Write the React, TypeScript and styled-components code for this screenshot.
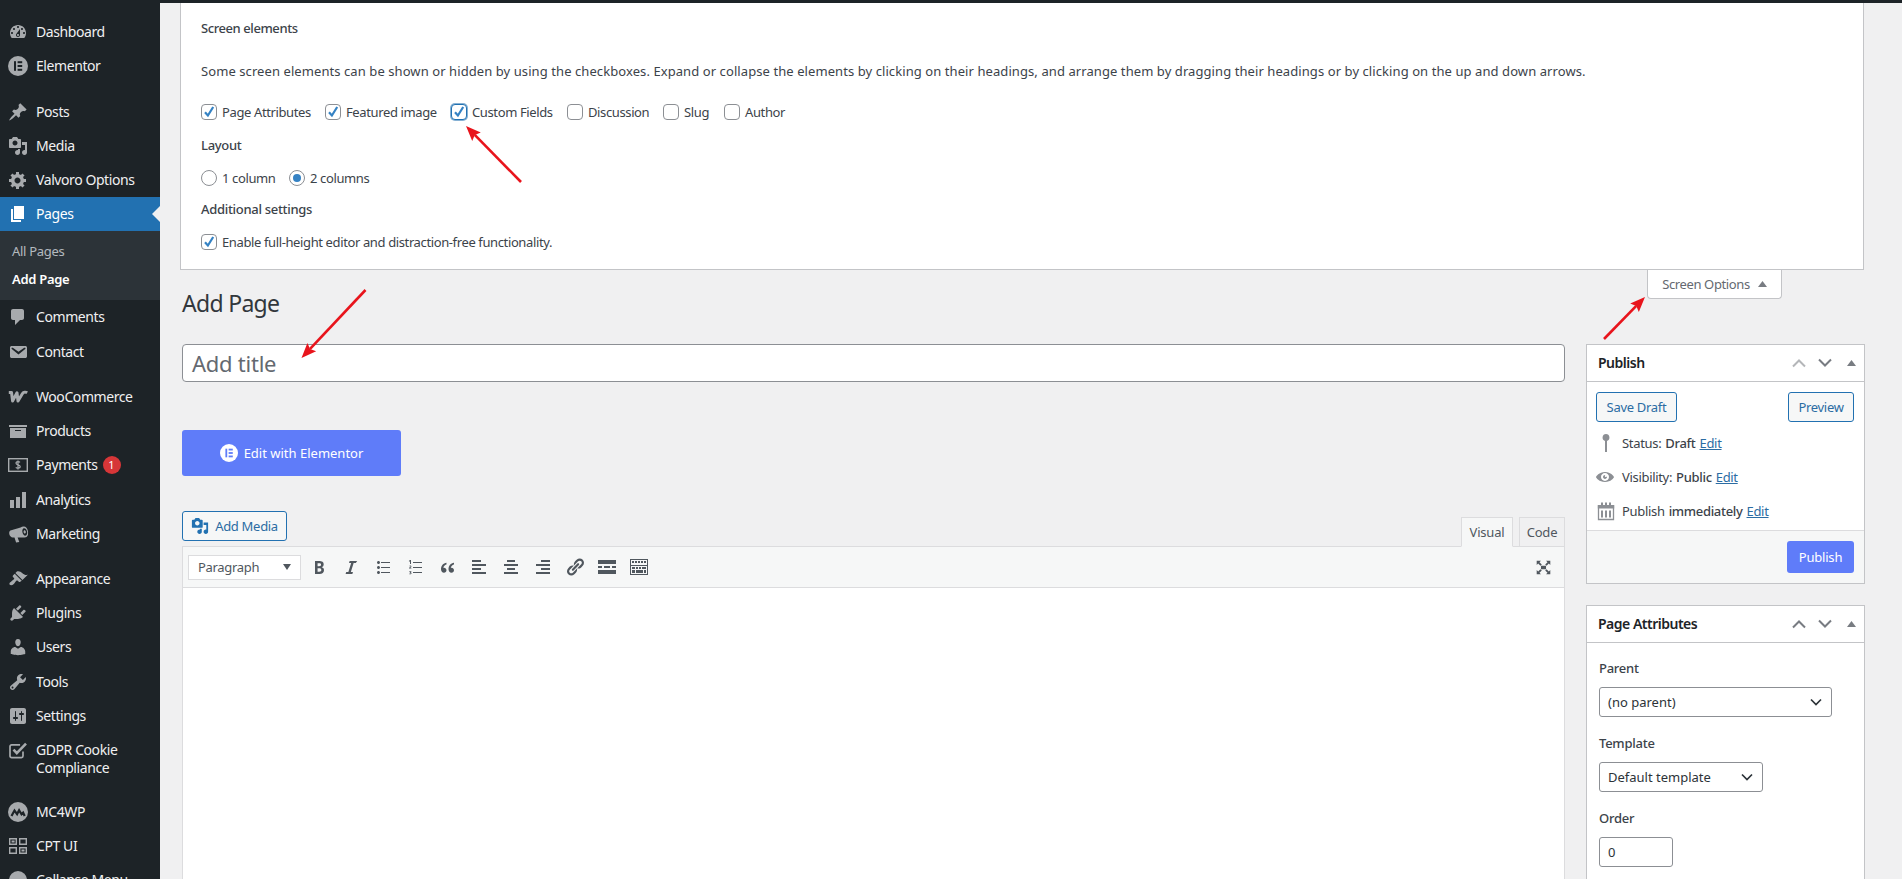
import React from "react";
import styled, { createGlobalStyle } from "styled-components";

const FONT = `"Noto Sans", "Open Sans", "Liberation Sans", sans-serif`;

const Global = createGlobalStyle`
  html, body { margin: 0; padding: 0; height: 879px; overflow: hidden; background: #f0f0f1; }
  body { font-family: ${FONT}; font-size: 13px; color: #3c434a; line-height: 1.4; }
  * { box-sizing: border-box; }
`;

const Page = styled.div`
  width: 1902px;
  height: 879px;
  position: relative;
  overflow: hidden;
  background: #f0f0f1;
  border-top: 3px solid #1d2327;
  display: flex;
`;

/* ---------- sidebar ---------- */
const Sidebar = styled.nav`
  width: 160px;
  flex: none;
  height: 876px;
  background: #1d2327;
  padding-top: 12px;
  overflow: hidden;
`;
const MenuItem = styled.div<{ $active?: boolean; $gap?: boolean; $tall?: boolean }>`
  position: relative;
  display: flex;
  align-items: ${(p) => (p.$tall ? "flex-start" : "center")};
  min-height: 34.22px;
  padding: ${(p) => (p.$tall ? "8px 0 7px" : "0")};
  margin-top: ${(p) => (p.$gap ? "11px" : "0")};
  background: ${(p) => (p.$active ? "#2271b1" : "transparent")};
  color: ${(p) => (p.$active ? "#fff" : "#f0f0f1")};
  font-size: 14px;
  line-height: 18px;
  letter-spacing: -0.42px;
  svg { color: ${(p) => (p.$active ? "#fff" : "#a7aaad")}; }
  ${(p) =>
    p.$active
      ? `&::after {
          content: "";
          position: absolute;
          right: 0;
          top: 50%;
          margin-top: -8px;
          border: 8px solid transparent;
          border-right-color: #f0f0f1;
          border-left-width: 0;
        }`
      : ""}
`;
const MenuIcon = styled.span`
  width: 36px;
  flex: none;
  display: flex;
  justify-content: center;
  svg { display: block; }
`;
const Badge = styled.span`
  display: inline-block;
  width: 18px;
  height: 18px;
  border-radius: 50%;
  background: #d63638;
  color: #fff;
  font-size: 11px;
  line-height: 18px;
  text-align: center;
  margin-left: 5px;
  letter-spacing: 0;
`;
const Submenu = styled.div`
  background: #2c3338;
  padding: 7px 0 6px;
  height: 69px;
`;
const SubItem = styled.div<{ $current?: boolean }>`
  padding-left: 12px;
  height: 28px;
  line-height: 26px;
  font-size: 13px;
  letter-spacing: -0.3px;
  color: ${(p) => (p.$current ? "#fff" : "rgba(240,246,252,.7)")};
  font-weight: ${(p) => (p.$current ? 600 : 400)};
`;

/* ---------- main ---------- */
const Main = styled.main`
  flex: 1;
  min-width: 0;
  padding: 0 38px 0 20px;
  display: flex;
  flex-direction: column;
`;
const OptionsPanel = styled.section`
  height: 267px;
  flex: none;
  background: #fff;
  border: 1px solid #c3c4c7;
  border-top: none;
  padding: 16px 20px 0;
`;
const PanelHeading = styled.div`
  font-weight: 500;
  line-height: 18px;
  letter-spacing: -0.42px;
`;
const PanelText = styled.p`
  margin: 25px 0 0;
  line-height: 18px;
  letter-spacing: 0.08px;
`;
const CheckRow = styled.div<{ $top: number }>`
  display: flex;
  align-items: center;
  margin-top: ${(p) => p.$top}px;
  height: 18px;
  letter-spacing: -0.38px;
`;
const PanelSub = styled(PanelHeading)<{ $top: number }>`
  margin-top: ${(p) => p.$top}px;
  letter-spacing: -0.3px;
`;
const OptLabel = styled.label<{ $w?: number }>`
  display: flex;
  align-items: center;
  gap: 5px;
  width: ${(p) => (p.$w ? `${p.$w}px` : "auto")};
  line-height: 18px;
`;
const Check = styled.span<{ $focus?: boolean }>`
  width: 16px;
  height: 16px;
  flex: none;
  border: 1px solid ${(p) => (p.$focus ? "#2271b1" : "#8c8f94")};
  border-radius: 4px;
  background: #fff;
  box-shadow: ${(p) => (p.$focus ? "0 0 0 1px rgba(34,113,177,.55)" : "none")};
  display: flex;
  align-items: center;
  justify-content: center;
`;
const Radio = styled.span<{ $on?: boolean }>`
  width: 16px;
  height: 16px;
  flex: none;
  border: 1px solid #8c8f94;
  border-radius: 50%;
  background: #fff;
  display: flex;
  align-items: center;
  justify-content: center;
  &::before {
    content: "";
    width: 8px;
    height: 8px;
    border-radius: 50%;
    background: ${(p) => (p.$on ? "#3582c4" : "transparent")};
  }
`;

const HeadRow = styled.div`
  display: flex;
  justify-content: space-between;
  align-items: flex-start;
  height: 74px;
  flex: none;
`;
const Title = styled.h1`
  margin: 17px 0 0 2px;
  font-size: 23px;
  font-weight: 400;
  line-height: 32px;
  color: #32373c;
  letter-spacing: -0.7px;
`;
const ScreenTab = styled.div`
  width: 135px;
  height: 29px;
  margin-right: 82px;
  background: #fff;
  border: 1px solid #c3c4c7;
  border-top: none;
  border-radius: 0 0 4px 4px;
  display: flex;
  align-items: center;
  justify-content: center;
  gap: 8px;
  font-size: 13px;
  letter-spacing: -0.38px;
  color: #646970;
`;
const Columns = styled.div`
  display: flex;
  gap: 21px;
  padding-left: 2px;
`;
const LeftCol = styled.div`
  width: 1383px;
  flex: none;
`;
const RightCol = styled.aside`
  width: 279px;
  flex: none;
  display: flex;
  flex-direction: column;
  gap: 21px;
`;
const TitleInput = styled.div`
  height: 38px;
  border: 1px solid #8c8f94;
  border-radius: 4px;
  background: #fff;
  font-size: 22px;
  line-height: 36px;
  padding-left: 9px;
  color: #646970;
  letter-spacing: -0.25px;
`;
const ElementorButton = styled.div`
  margin-top: 48px;
  width: 219px;
  height: 46px;
  background: #5f7cf9;
  border-radius: 3px;
  color: #fff;
  font-size: 13px;
  letter-spacing: 0;
  display: flex;
  align-items: center;
  justify-content: center;
  gap: 6px;
`;
const AddMediaRow = styled.div`
  display: flex;
  justify-content: space-between;
  align-items: flex-end;
  margin-top: 35px;
  height: 35px;
`;
const OutlineButton = styled.div`
  height: 30px;
  border: 1px solid #2271b1;
  border-radius: 3px;
  background: #f6f7f7;
  color: #2b6ca3;
  display: inline-flex;
  align-items: center;
  justify-content: center;
  font-size: 13px;
  letter-spacing: -0.3px;
`;
const AddMedia = styled(OutlineButton)`
  width: 105px;
  margin-bottom: 5px;
  gap: 6px;
  svg { color: #2271b1; }
`;
const Tabs = styled.div`
  display: flex;
  gap: 6px;
  margin-bottom: -1px;
  position: relative;
`;
const Tab = styled.div<{ $active?: boolean }>`
  height: 30px;
  width: ${(p) => (p.$active ? 52 : 46)}px;
  display: flex;
  align-items: center;
  justify-content: center;
  border: 1px solid #dcdcde;
  border-bottom-color: ${(p) => (p.$active ? "#f6f7f7" : "#dcdcde")};
  background: ${(p) => (p.$active ? "#f6f7f7" : "#f0f0f1")};
  font-size: 13px;
  letter-spacing: -0.2px;
  color: #50575e;
`;
const Editor = styled.div`
  border: 1px solid #dcdcde;
  background: #fff;
  height: 400px;
`;
const Toolbar = styled.div`
  height: 41px;
  background: #f6f7f7;
  border-bottom: 1px solid #dcdcde;
  display: flex;
  align-items: center;
  padding-left: 5px;
  color: #50575e;
`;
const FormatSelect = styled.div`
  width: 113px;
  height: 25px;
  background: #fff;
  border: 1px solid #dcdcde;
  display: flex;
  align-items: center;
  justify-content: space-between;
  padding: 0 9px;
  margin-right: 2px;
  font-size: 13px;
  letter-spacing: -0.3px;
  color: #50575e;
`;
const SmallCaret = styled.span`
  width: 0;
  height: 0;
  border-left: 4px solid transparent;
  border-right: 4px solid transparent;
  border-top: 6px solid #50575e;
`;
const ToolBtn = styled.span`
  width: 32px;
  flex: none;
  display: flex;
  justify-content: center;
  svg { display: block; }
`;
const Spacer = styled.div`
  flex: 1;
`;
const FullBtn = styled(ToolBtn)`
  margin-right: 5px;
`;

const MetaBox = styled.section<{ $h: number }>`
  border: 1px solid #c3c4c7;
  background: #fff;
  height: ${(p) => p.$h}px;
  flex: none;
`;
const MetaHead = styled.header`
  height: 37px;
  border-bottom: 1px solid #c3c4c7;
  display: flex;
  align-items: center;
  padding: 0 0 0 11px;
`;
const MetaTitle = styled.h2`
  margin: 0;
  flex: 1;
  font-size: 14px;
  font-weight: 600;
  letter-spacing: -0.5px;
  color: #1d2327;
`;
const MetaCtl = styled.span`
  width: 26px;
  flex: none;
  display: flex;
  justify-content: center;
  svg { display: block; }
`;
const MetaActions = styled.div`
  display: flex;
  justify-content: space-between;
  padding: 10px 10px 0 9px;
`;
const SaveDraft = styled(OutlineButton)`
  width: 81px;
`;
const Preview = styled(OutlineButton)`
  width: 66px;
`;
const MiscRow = styled.div<{ $first?: boolean }>`
  display: flex;
  align-items: center;
  height: 34px;
  padding-left: 9px;
  margin-top: ${(p) => (p.$first ? "4px" : "0")};
  letter-spacing: -0.32px;
  color: #3c434a;
  svg { color: #8c8f94; flex: none; }
  b { font-weight: 500; margin: 0 4px; }
`;
const MiscIcon = styled.span`
  width: 26px;
  flex: none;
  display: flex;
  justify-content: flex-start;
`;
const EditLink = styled.a`
  color: #2b6ca3;
  text-decoration: underline;
`;
const MetaFooter = styled.div`
  margin-top: 2px;
  height: 53px;
  background: #f6f7f7;
  border-top: 1px solid #dcdcde;
  display: flex;
  align-items: center;
  justify-content: flex-end;
  padding-right: 10px;
`;
const PublishBtn = styled.div`
  width: 67px;
  height: 32px;
  border-radius: 3px;
  background: #5f7cf9;
  color: #fff;
  display: flex;
  align-items: center;
  justify-content: center;
  letter-spacing: -0.2px;
`;
const AttrBody = styled.div`
  padding: 0 12px;
`;
const AttrLabel = styled.div<{ $top: number }>`
  margin-top: ${(p) => p.$top}px;
  font-weight: 500;
  line-height: 18px;
  letter-spacing: -0.25px;
`;
const SelectBox = styled.div<{ $w: number }>`
  margin-top: 10px;
  width: ${(p) => p.$w}px;
  height: 30px;
  border: 1px solid #8c8f94;
  border-radius: 3px;
  background: #fff;
  display: flex;
  align-items: center;
  justify-content: space-between;
  padding: 0 9px 0 8px;
  color: #2c3338;
  svg { display: block; }
`;
const Annotations = styled.svg`
  position: absolute;
  left: 0;
  top: -3px;
  width: 1902px;
  height: 879px;
  pointer-events: none;
`;

/* ---------- icons ---------- */
const I = ({ d, size = 20 }: { d: string; size?: number }) => (
  <svg width={size} height={size} viewBox="0 0 20 20" fill="currentColor">
    <path d={d} />
  </svg>
);
const P = {
  dashboard:
    "M3.76 16h12.48c1.1-1.37 1.76-3.11 1.76-5 0-4.42-3.58-8-8-8s-8 3.58-8 8c0 1.89.66 3.63 1.76 5zM10 4c.55 0 1 .45 1 1s-.45 1-1 1-1-.45-1-1 .45-1 1-1zM6 6c.55 0 1 .45 1 1s-.45 1-1 1-1-.45-1-1 .45-1 1-1zm8 0c.55 0 1 .45 1 1s-.45 1-1 1-1-.45-1-1 .45-1 1-1zm-5.37 5.55L12 7v6c0 1.1-.9 2-2 2s-2-.9-2-2c0-.57.24-1.08.63-1.45zM4 10c.55 0 1 .45 1 1s-.45 1-1 1-1-.45-1-1 .45-1 1-1zm12 0c.55 0 1 .45 1 1s-.45 1-1 1-1-.45-1-1 .45-1 1-1zm-5 3c0-.55-.45-1-1-1s-1 .45-1 1 .45 1 1 1 1-.45 1-1z",
  post:
    "M10.44 3.02l1.82-1.82 6.36 6.35-1.83 1.82c-1.05-.68-2.48-.57-3.41.36l-.75.75c-.92.93-1.04 2.35-.35 3.41l-1.83 1.82-2.41-2.41-2.8 2.79c-.42.42-3.38 2.71-3.8 2.29s1.86-3.39 2.28-3.81l2.79-2.79L4.1 9.36l1.83-1.82c1.05.69 2.48.57 3.4-.36l.75-.75c.93-.92 1.05-2.35.36-3.41z",
  media:
    "M13 11V4c0-.55-.45-1-1-1h-1.67L9 1H5L3.67 3H2c-.55 0-1 .45-1 1v7c0 .55.45 1 1 1h10c.55 0 1-.45 1-1zM7 4.5c1.38 0 2.5 1.12 2.5 2.5S8.38 9.5 7 9.5 4.5 8.38 4.5 7 5.62 4.5 7 4.5zM14 6h5v10.5c0 1.38-1.12 2.5-2.5 2.5S14 17.88 14 16.5s1.12-2.5 2.5-2.5c.17 0 .34.02.5.05V9h-3V6zm-4 8.05V13h2v3.5c0 1.38-1.12 2.5-2.5 2.5S7 17.88 7 16.5 8.12 14 9.5 14c.17 0 .34.02.5.05z",
  gear:
    "M18 12h-2.18c-.17.7-.44 1.35-.81 1.93l1.54 1.54-2.1 2.1-1.54-1.54c-.58.36-1.23.63-1.91.79V19H8v-2.18c-.68-.16-1.33-.43-1.91-.79l-1.54 1.54-2.12-2.12 1.54-1.54c-.36-.58-.63-1.23-.79-1.91H1V9.03h2.17c.16-.7.44-1.35.8-1.94L2.43 5.55l2.1-2.1 1.54 1.54c.58-.37 1.24-.64 1.93-.81V2h3v2.18c.68.16 1.33.43 1.91.79l1.54-1.54 2.12 2.12-1.54 1.54c.36.59.64 1.24.8 1.94H18V12zm-8.5 1.5c1.66 0 3-1.34 3-3s-1.34-3-3-3-3 1.34-3 3 1.34 3 3 3z",
  page: "M6 15V2h10v13H6zm-1 1h8v2H3V5h2v11z",
  comment: "M5 2h9c1.1 0 2 .9 2 2v7c0 1.1-.9 2-2 2h-2l-5 5v-5H5c-1.1 0-2-.9-2-2V4c0-1.1.9-2 2-2z",
  email:
    "M3.87 4h13.25C18.37 4 19 4.59 19 5.79v8.42c0 1.19-.63 1.79-1.88 1.79H3.87c-1.25 0-1.88-.6-1.88-1.79V5.79c0-1.2.63-1.79 1.88-1.79zm6.62 8.6l6.74-5.53c.24-.2.43-.66.13-1.07-.29-.41-.82-.42-1.17-.17l-5.7 3.86L4.8 5.83c-.35-.25-.88-.24-1.17.17-.3.41-.11.87.13 1.07z",
  archive: "M19 4v2H1V4h18zM2 7h16v10H2V7zm11 3V9H7v1h6z",
  bars: "M18 18V2h-4v16h4zm-6 0V7H8v11h4zm-6 0v-8H2v8h4z",
  megaphone:
    "M15.4 2.6c1.9-.5 4 1.5 4.6 4.6.5 3-.3 5.5-2.2 6l-1.2.2H9.6l1.7 4.6-3.2.5-1.6-5.1H4.6c-1.4 0-2.6-1.2-3.2-2.9-.5-1.8-.1-3.4 1-4L12.6 3.4c.9-.5 1.9-.7 2.8-.8zm.5 1.7c-1.3.3-1.9 2.2-1.4 4.2.5 2.1 1.9 3.4 3.2 3.1 1.2-.4 1.8-2.3 1.3-4.3-.5-2-1.9-3.3-3.1-3zm.4 2c.7-.2 1.3.5 1.5 1.4.2.9-.1 1.7-.7 1.9-.7.1-1.3-.5-1.5-1.4-.2-.9.1-1.7.7-1.9z",
  appearance:
    "M14.48 11.06L7.41 3.99l1.5-1.5c.5-.56 2.3-.47 3.51.32 1.21.8 1.43 1.28 2.91 2.1 1.18.64 2.45 1.26 4.45.85zm-.71.71L6.7 4.7 4.93 6.47c-.39.39-.39 1.02 0 1.41l1.06 1.06c.39.39.39 1.03 0 1.42-.6.6-1.43 1.11-2.21 1.69-.35.26-.7.53-1.01.84C1.43 13.23.99 14.95 1.87 15.82c.87.87 2.59.44 3.93-.9.31-.31.58-.66.84-1.01.58-.78 1.09-1.61 1.69-2.21.39-.39 1.02-.39 1.41 0l1.06 1.06c.39.39 1.02.39 1.41 0z",
  plugins:
    "M13.11 4.36L9.87 7.6 8 5.73l3.24-3.24c.35-.34 1.05-.2 1.56.32.52.51.66 1.21.31 1.55zm-8 1.77l.91-1.12 9.01 9.01-1.19.84c-.71.71-2.63 1.16-3.82 1.16H6.14L4.9 17.26c-.59.59-1.54.59-2.12 0-.59-.58-.59-1.53 0-2.12l1.24-1.24v-3.88c0-1.13.4-3.19 1.09-3.89zm7.26 3.97l3.24-3.24c.34-.35 1.04-.21 1.55.31.52.51.66 1.21.31 1.55l-3.24 3.25z",
  users:
    "M10 9.25c-2.27 0-2.73-3.44-2.73-3.44C7 4.02 7.82 2 9.97 2c2.16 0 2.98 2.02 2.71 3.81 0 0-.41 3.44-2.68 3.44zm0 2.57L12.72 10c2.39 0 4.52 2.33 4.52 4.53v2.49s-3.65 1.13-7.24 1.13c-3.65 0-7.24-1.13-7.24-1.13v-2.49c0-2.25 1.94-4.48 4.47-4.48z",
  tools:
    "M16.68 9.77c-1.34 1.34-3.3 1.67-4.95.99l-5.41 6.52c-.99.99-2.59.99-3.58 0s-.99-2.59 0-3.57l6.52-5.42c-.68-1.65-.35-3.61.99-4.95 1.28-1.28 3.12-1.62 4.72-1.06l-2.89 2.89 2.82 2.82 2.86-2.87c.53 1.58.18 3.39-1.08 4.65zM3.81 16.21c.4.39 1.04.39 1.43 0 .4-.4.4-1.04 0-1.43-.39-.4-1.03-.4-1.43 0-.39.39-.39 1.03 0 1.43z",
  settings:
    "M18 16V4c0-1.1-.9-2-2-2H4c-1.1 0-2 .9-2 2v12c0 1.1.9 2 2 2h12c1.1 0 2-.9 2-2zM8 11h1c.55 0 1 .45 1 1s-.45 1-1 1H8v1.5c0 .28-.22.5-.5.5s-.5-.22-.5-.5V13H6c-.55 0-1-.45-1-1s.45-1 1-1h1V5.5c0-.28.22-.5.5-.5s.5.22.5.5V11zm5-2h-1c-.55 0-1-.45-1-1s.45-1 1-1h1V5.5c0-.28.22-.5.5-.5s.5.22.5.5V7h1c.55 0 1 .45 1 1s-.45 1-1 1h-1v5.5c0 .28-.22.5-.5.5s-.5-.22-.5-.5V9z",
  eye:
    "M10 4.4C3.439 4.4 0 9.232 0 10c0 .766 3.439 5.6 10 5.6 6.56 0 10-4.834 10-5.6 0-.768-3.44-5.6-10-5.6zm0 9.907c-2.455 0-4.445-1.928-4.445-4.307S7.545 5.691 10 5.691s4.444 1.93 4.444 4.309-1.989 4.307-4.444 4.307zM10 10c-.407-.447.663-2.154 0-2.154-1.228 0-2.223.965-2.223 2.154s.995 2.154 2.223 2.154c1.227 0 2.223-.965 2.223-2.154 0-.547-1.877.379-2.223 0z",
  bold:
    "M6 4v13h4.54c1.37 0 2.46-.33 3.26-1 .8-.66 1.2-1.58 1.2-2.77 0-.84-.17-1.51-.51-2.01s-.9-.85-1.67-1.03v-.09c.57-.1 1.02-.4 1.36-.9s.51-1.13.51-1.91c0-1.14-.39-1.98-1.17-2.5C12.75 4.26 11.5 4 9.78 4H6zm2.57 5.15V6.26h1.36c.73 0 1.27.11 1.61.32.34.22.51.58.51 1.07 0 .54-.16.92-.47 1.15s-.82.35-1.51.35h-1.5zm0 2.19h1.6c1.44 0 2.16.53 2.16 1.61 0 .6-.17 1.05-.51 1.34s-.86.43-1.57.43H8.57v-3.38z",
  italic: "M14.78 6h-2.13l-2.8 9h2.12l-.62 2H4.6l.62-2h2.14l2.8-9H8.03l.62-2h7.57z",
  bullist:
    "M5.5 7C4.67 7 4 6.33 4 5.5 4 4.68 4.67 4 5.5 4 6.32 4 7 4.68 7 5.5 7 6.33 6.32 7 5.5 7zM8 5h9v1H8V5zm-2.5 7c-.83 0-1.5-.67-1.5-1.5C4 9.68 4.67 9 5.5 9c.82 0 1.5.68 1.5 1.5 0 .83-.68 1.5-1.5 1.5zM8 10h9v1H8v-1zm-2.5 7c-.83 0-1.5-.67-1.5-1.5 0-.82.67-1.5 1.5-1.5.82 0 1.5.68 1.5 1.5 0 .83-.68 1.5-1.5 1.5zM8 15h9v1H8v-1z",
  numlist:
    "M5 3h1v4H5V4.2l-.8.5-.4-.6L5 3zM8 5h9v1H8V5zM4 9.2c.2-.5.7-.7 1.2-.7.7 0 1.2.4 1.2 1 0 .5-.3.8-1 1.4h1v.6H4v-.6l1.2-1.1c.3-.3.4-.4.4-.6 0-.2-.2-.3-.4-.3-.3 0-.4.1-.5.4L4 9.2zM8 10h9v1H8v-1zM4 14h2.4v.5l-.8.8c.6.1.9.4.9.9 0 .7-.5 1.1-1.3 1.1-.5 0-.9-.1-1.2-.3v-.6c.3.2.7.3 1 .3.3 0 .6-.1.6-.4 0-.3-.3-.4-.8-.4v-.5l.8-.8H4V14zm4 1h9v1H8v-1z",
  quote:
    "M9.49 13.22c0-1.37-1.11-2.48-2.48-2.48-.25 0-.48.04-.7.11.32-1.93 2.2-3.1 3.18-3.3V5.8C6.3 6.2 4 8.7 4 12.3c0 1.9 1.3 3.4 3 3.4 1.38 0 2.49-1.1 2.49-2.48zm7.5 0c0-1.37-1.11-2.48-2.48-2.48-.25 0-.48.04-.7.11.32-1.93 2.2-3.1 3.18-3.3V5.8c-3.19.4-5.49 2.9-5.49 6.5 0 1.9 1.3 3.4 3 3.4 1.38 0 2.49-1.1 2.49-2.48z",
  alignLeft: "M12 5V3H3v2h9zm5 4V7H3v2h14zm-5 4v-2H3v2h9zm5 4v-2H3v2h14z",
  alignCenter: "M14 5V3H6v2h8zm3 4V7H3v2h14zm-3 4v-2H6v2h8zm3 4v-2H3v2h14z",
  alignRight: "M17 5V3H8v2h9zm0 4V7H3v2h14zm0 4v-2H8v2h9zm0 4v-2H3v2h14z",
  link:
    "M17.74 2.76c1.68 1.69 1.68 4.41 0 6.1l-1.53 1.52c-1.12 1.12-2.7 1.47-4.14 1.09l2.62-2.61.76-.77.76-.76c.84-.84.84-2.2 0-3.04-.84-.85-2.2-.85-3.04 0l-.77.76-3.38 3.38c-.37-1.44-.02-3.02 1.1-4.14l1.52-1.53c1.69-1.68 4.42-1.68 6.1 0zM8.59 13.43l5.34-5.34c.42-.42.42-1.1 0-1.52-.44-.43-1.13-.39-1.53 0l-5.33 5.34c-.42.42-.42 1.1 0 1.52.44.43 1.13.39 1.52 0zm-.76 2.29l4.14-4.15c.38 1.44.03 3.02-1.09 4.14l-1.52 1.53c-1.69 1.68-4.41 1.68-6.1 0-1.68-1.68-1.68-4.42 0-6.1l1.53-1.52c1.12-1.12 2.7-1.47 4.14-1.1l-4.14 4.15c-.85.84-.85 2.2 0 3.05.84.84 2.2.84 3.04 0z",
  more: "M1 3h18v4H1V3zm0 6h4v2H1V9zm6 0h6v2H7V9zm8 0h4v2h-4V9zM1 13h18v4H1v-4z",
  kitchen:
    "M1 2h18v16H1V2zm1 1v5h16V3H2zm1 1h2v2H3V4zm3 0h2v2H6V4zm3 0h2v2H9V4zm3 0h2v2h-2V4zm3 0h2v2h-2V4zM2 9v8h16V9H2zm1 1h3v2H3v-2zm4 0h2v2H7v-2zm3 0h2v2h-2v-2zm3 0h4v2h-4v-2zM3 13h3v3H3v-3zm4 0h7v3H7v-3zm8 0h2v3h-2v-3z",
  full:
    "M2 2h5L5.3 3.7 8 6.4 6.4 8 3.7 5.3 2 7V2zm16 0v5l-1.7-1.7L13.6 8 12 6.4l2.7-2.7L13 2h5zM2 18v-5l1.7 1.7L6.4 12 8 13.6l-2.7 2.7L7 18H2zm16 0h-5l1.7-1.7L12 13.6l1.6-1.6 2.7 2.7L18 13v5zM7 8h6v4H7V8z",
};

const ElementorIcon = ({ bg, size = 20, color }: { bg: string; size?: number; color: string }) => (
  <svg width={size} height={size} viewBox="0 0 20 20">
    <circle cx="10" cy="10" r="10" fill={color} />
    <rect x="6" y="5.2" width="2" height="9.6" fill={bg} />
    <rect x="9.6" y="5.2" width="4.6" height="2" fill={bg} />
    <rect x="9.6" y="9" width="4.6" height="2" fill={bg} />
    <rect x="9.6" y="12.8" width="4.6" height="2" fill={bg} />
  </svg>
);
const Woo = () => (
  <svg width="20" height="20" viewBox="0 0 20 20" fill="none" stroke="currentColor" strokeWidth="3" strokeLinejoin="round">
    <path d="M0.800 5.500H3.500L4.600 14L9 5.800L10 14L14.500 6.500C15.500 5 18 5 19.200 5.800" />
  </svg>
);
const Dollar = () => (
  <svg width="20" height="20" viewBox="0 0 20 20" fill="none" stroke="currentColor">
    <rect x="0.7" y="3.7" width="18.6" height="12.6" strokeWidth="1.4" />
    <path d="M12 7.400c-.4-.5-1.100-.8-2-.8-1.200 0-2 .6-2 1.600 0 2.200 4.200 1.200 4.200 3.400 0 1-.9 1.600-2.200 1.600-1 0-1.800-.3-2.200-.9M10 5.500v9" strokeWidth="1.2" />
  </svg>
);
const Gdpr = () => (
  <svg width="20" height="20" viewBox="0 0 20 20" fill="none" stroke="currentColor">
    <path d="M15 10.500V15a1.600 1.600 0 0 1-1.600 1.600H3.600A1.600 1.600 0 0 1 2 15V5.500a1.600 1.600 0 0 1 1.600-1.600h8.500" strokeWidth="1.7" />
    <path d="M5.500 8.600l3.300 3.600L18 2.600" strokeWidth="2.6" />
  </svg>
);
const Mc4wp = () => (
  <svg width="20" height="20" viewBox="0 0 20 20">
    <circle cx="10" cy="10" r="10" fill="currentColor" />
    <path d="M3.500 14l3-5.500 2.600 3.600 2-3.800 2.400 4 1.600-1.600 1.600 3.300" fill="none" stroke="#1d2327" strokeWidth="2.2" />
  </svg>
);
const CptUi = () => (
  <svg width="20" height="20" viewBox="0 0 20 20" fill="currentColor">
    <path fillRule="evenodd" d="M1 2h8v7H1V2zm1.400 1.400v4.200H7.600V3.400H2.400zM3.600 4.600h3v2h-3v-2zM11 2h8v7h-8V2zm1.400 1.400v4.200h5.200V3.400h-5.200zM1 11h8v7H1v-7zm1.400 1.400v4.200h5.200v-4.200H2.400zM11 11h8v7h-8v-7zm1.400 1.400v4.200h5.200v-4.200h-5.200zM13.500 13.500h3v2h-3v-2z" />
  </svg>
);
const Collapse = () => (
  <svg width="20" height="20" viewBox="0 0 20 20" fill="currentColor">
    <circle cx="10" cy="10" r="9" />
  </svg>
);
const Pin = () => (
  <svg width="20" height="20" viewBox="0 0 20 20" fill="currentColor">
    <path d="M10 1a3.600 3.600 0 0 1 1 7v11H9V8a3.600 3.600 0 0 1 1-7z" />
  </svg>
);
const Calendar = () => (
  <svg width="20" height="20" viewBox="0 0 20 20" fill="none" stroke="currentColor">
    <path d="M2.500 5v13.500h15V5z" strokeWidth="1.300" />
    <path d="M1.800 4h16.400v3.500H1.800z" fill="currentColor" strokeWidth="0" />
    <path d="M6 1.500v4M14 1.500v4M10 1.500v3" strokeWidth="2" />
    <path d="M6 9.500v7M10 9.500v7M14 9.500v7" strokeWidth="2" />
  </svg>
);
const Tick = () => (
  <svg width="14" height="14" viewBox="0 0 14 14">
    <path d="M3 7.200l2.900 3.300L11.200 2" fill="none" stroke="#3582c4" strokeWidth="2.200" />
  </svg>
);
const ChevUp = ({ c }: { c: string }) => (
  <svg width="16" height="10" viewBox="0 0 16 10" fill="none" stroke={c} strokeWidth="2">
    <path d="M2 8.500l6-6 6 6" />
  </svg>
);
const ChevDown = ({ c }: { c: string }) => (
  <svg width="16" height="10" viewBox="0 0 16 10" fill="none" stroke={c} strokeWidth="2">
    <path d="M2 1.500l6 6 6-6" />
  </svg>
);
const Tri = ({ c = "#787c82" }: { c?: string }) => (
  <svg width="9" height="6" viewBox="0 0 9 6" fill={c}>
    <path d="M4.500 0L9 6H0z" />
  </svg>
);
const SelArrow = () => (
  <svg width="12" height="8" viewBox="0 0 12 8" fill="none" stroke="#2c3338" strokeWidth="1.700">
    <path d="M1 1.500l5 5 5-5" />
  </svg>
);
const Arrow = ({ x1, y1, x2, y2 }: { x1: number; y1: number; x2: number; y2: number }) => {
  const a = Math.atan2(y2 - y1, x2 - x1);
  const len = 15;
  const w = 6;
  const bx = x2 - len * Math.cos(a);
  const by = y2 - len * Math.sin(a);
  const nx = -Math.sin(a) * w;
  const ny = Math.cos(a) * w;
  const nb = 2.5;
  const ix = x2 - (len - nb) * Math.cos(a);
  const iy = y2 - (len - nb) * Math.sin(a);
  return (
    <g fill="#e8141c" stroke="none">
      <line x1={x1} y1={y1} x2={ix} y2={iy} stroke="#e8141c" strokeWidth="2.600" />
      <polygon points={`${x2},${y2} ${bx + nx},${by + ny} ${ix},${iy} ${bx - nx},${by - ny}`} />
    </g>
  );
};

export default function App() {
  return (
    <Page>
      <Global />
      <Sidebar>
        <MenuItem><MenuIcon><I d={P.dashboard} /></MenuIcon>Dashboard</MenuItem>
        <MenuItem><MenuIcon><ElementorIcon bg="#1d2327" color="#a7aaad" /></MenuIcon>Elementor</MenuItem>
        <MenuItem $gap><MenuIcon><I d={P.post} /></MenuIcon>Posts</MenuItem>
        <MenuItem><MenuIcon><I d={P.media} /></MenuIcon>Media</MenuItem>
        <MenuItem><MenuIcon><I d={P.gear} /></MenuIcon>Valvoro Options</MenuItem>
        <MenuItem $active><MenuIcon><I d={P.page} /></MenuIcon>Pages</MenuItem>
        <Submenu>
          <SubItem>All Pages</SubItem>
          <SubItem $current>Add Page</SubItem>
        </Submenu>
        <MenuItem><MenuIcon><I d={P.comment} /></MenuIcon>Comments</MenuItem>
        <MenuItem><MenuIcon><I d={P.email} /></MenuIcon>Contact</MenuItem>
        <MenuItem $gap><MenuIcon><Woo /></MenuIcon>WooCommerce</MenuItem>
        <MenuItem><MenuIcon><I d={P.archive} /></MenuIcon>Products</MenuItem>
        <MenuItem><MenuIcon><Dollar /></MenuIcon>Payments<Badge>1</Badge></MenuItem>
        <MenuItem><MenuIcon><I d={P.bars} /></MenuIcon>Analytics</MenuItem>
        <MenuItem><MenuIcon><I d={P.megaphone} /></MenuIcon>Marketing</MenuItem>
        <MenuItem $gap><MenuIcon><I d={P.appearance} /></MenuIcon>Appearance</MenuItem>
        <MenuItem><MenuIcon><I d={P.plugins} /></MenuIcon>Plugins</MenuItem>
        <MenuItem><MenuIcon><I d={P.users} /></MenuIcon>Users</MenuItem>
        <MenuItem><MenuIcon><I d={P.tools} /></MenuIcon>Tools</MenuItem>
        <MenuItem><MenuIcon><I d={P.settings} /></MenuIcon>Settings</MenuItem>
        <MenuItem $tall><MenuIcon><Gdpr /></MenuIcon><span>GDPR Cookie<br />Compliance</span></MenuItem>
        <MenuItem $gap><MenuIcon><Mc4wp /></MenuIcon>MC4WP</MenuItem>
        <MenuItem><MenuIcon><CptUi /></MenuIcon>CPT UI</MenuItem>
        <MenuItem><MenuIcon><Collapse /></MenuIcon>Collapse Menu</MenuItem>
      </Sidebar>
      <Main>
        <OptionsPanel>
          <PanelHeading>Screen elements</PanelHeading>
          <PanelText>
            Some screen elements can be shown or hidden by using the checkboxes. Expand or collapse the elements by clicking on their headings, and arrange them by dragging their headings or by clicking on the up and down arrows.
          </PanelText>
          <CheckRow $top={23}>
            <OptLabel $w={124}><Check><Tick /></Check>Page Attributes</OptLabel>
            <OptLabel $w={126}><Check><Tick /></Check>Featured image</OptLabel>
            <OptLabel $w={116}><Check $focus><Tick /></Check>Custom Fields</OptLabel>
            <OptLabel $w={96}><Check />Discussion</OptLabel>
            <OptLabel $w={61}><Check />Slug</OptLabel>
            <OptLabel><Check />Author</OptLabel>
          </CheckRow>
          <PanelSub $top={15}>Layout</PanelSub>
          <CheckRow $top={15}>
            <OptLabel $w={88}><Radio />1 column</OptLabel>
            <OptLabel><Radio $on />2 columns</OptLabel>
          </CheckRow>
          <PanelSub $top={13}>Additional settings</PanelSub>
          <CheckRow $top={15}>
            <OptLabel><Check><Tick /></Check>Enable full-height editor and distraction-free functionality.</OptLabel>
          </CheckRow>
        </OptionsPanel>
        <HeadRow>
          <Title>Add Page</Title>
          <ScreenTab>Screen Options <Tri /></ScreenTab>
        </HeadRow>
        <Columns>
          <LeftCol>
            <TitleInput>Add title</TitleInput>
            <ElementorButton><ElementorIcon bg="#5f7cf9" color="#fff" size={18} />Edit with Elementor</ElementorButton>
            <AddMediaRow>
              <AddMedia><I d={P.media} size={18} />Add Media</AddMedia>
              <Tabs>
                <Tab $active>Visual</Tab>
                <Tab>Code</Tab>
              </Tabs>
            </AddMediaRow>
            <Editor>
              <Toolbar>
                <FormatSelect>Paragraph<SmallCaret /></FormatSelect>
                <ToolBtn><I d={P.bold} /></ToolBtn>
                <ToolBtn><I d={P.italic} /></ToolBtn>
                <ToolBtn><I d={P.bullist} /></ToolBtn>
                <ToolBtn><I d={P.numlist} /></ToolBtn>
                <ToolBtn><I d={P.quote} /></ToolBtn>
                <ToolBtn><I d={P.alignLeft} /></ToolBtn>
                <ToolBtn><I d={P.alignCenter} /></ToolBtn>
                <ToolBtn><I d={P.alignRight} /></ToolBtn>
                <ToolBtn><I d={P.link} /></ToolBtn>
                <ToolBtn><I d={P.more} /></ToolBtn>
                <ToolBtn><I d={P.kitchen} /></ToolBtn>
                <Spacer />
                <FullBtn><I d={P.full} size={17} /></FullBtn>
              </Toolbar>
            </Editor>
          </LeftCol>
          <RightCol>
            <MetaBox $h={240}>
              <MetaHead>
                <MetaTitle>Publish</MetaTitle>
                <MetaCtl><ChevUp c="#b4b6b9" /></MetaCtl>
                <MetaCtl><ChevDown c="#787c82" /></MetaCtl>
                <MetaCtl><Tri /></MetaCtl>
              </MetaHead>
              <MetaActions>
                <SaveDraft>Save Draft</SaveDraft>
                <Preview>Preview</Preview>
              </MetaActions>
              <MiscRow $first><MiscIcon><Pin /></MiscIcon>Status:<b>Draft</b><EditLink>Edit</EditLink></MiscRow>
              <MiscRow><MiscIcon><I d={P.eye} size={18} /></MiscIcon>Visibility:<b>Public</b><EditLink>Edit</EditLink></MiscRow>
              <MiscRow><MiscIcon><Calendar /></MiscIcon>Publish<b>immediately</b><EditLink>Edit</EditLink></MiscRow>
              <MetaFooter><PublishBtn>Publish</PublishBtn></MetaFooter>
            </MetaBox>
            <MetaBox $h={300}>
              <MetaHead>
                <MetaTitle>Page Attributes</MetaTitle>
                <MetaCtl><ChevUp c="#787c82" /></MetaCtl>
                <MetaCtl><ChevDown c="#787c82" /></MetaCtl>
                <MetaCtl><Tri /></MetaCtl>
              </MetaHead>
              <AttrBody>
                <AttrLabel $top={16}>Parent</AttrLabel>
                <SelectBox $w={233}>(no parent)<SelArrow /></SelectBox>
                <AttrLabel $top={17}>Template</AttrLabel>
                <SelectBox $w={164}>Default template<SelArrow /></SelectBox>
                <AttrLabel $top={17}>Order</AttrLabel>
                <SelectBox $w={74}>0</SelectBox>
              </AttrBody>
            </MetaBox>
          </RightCol>
        </Columns>
      </Main>
      <Annotations viewBox="0 0 1902 879">
        <Arrow x1={521} y1={182} x2={466} y2={126} />
        <Arrow x1={365.500} y1={290} x2={301.500} y2={358} />
        <Arrow x1={1604} y1={339} x2={1645} y2={297} />
      </Annotations>
    </Page>
  );
}
